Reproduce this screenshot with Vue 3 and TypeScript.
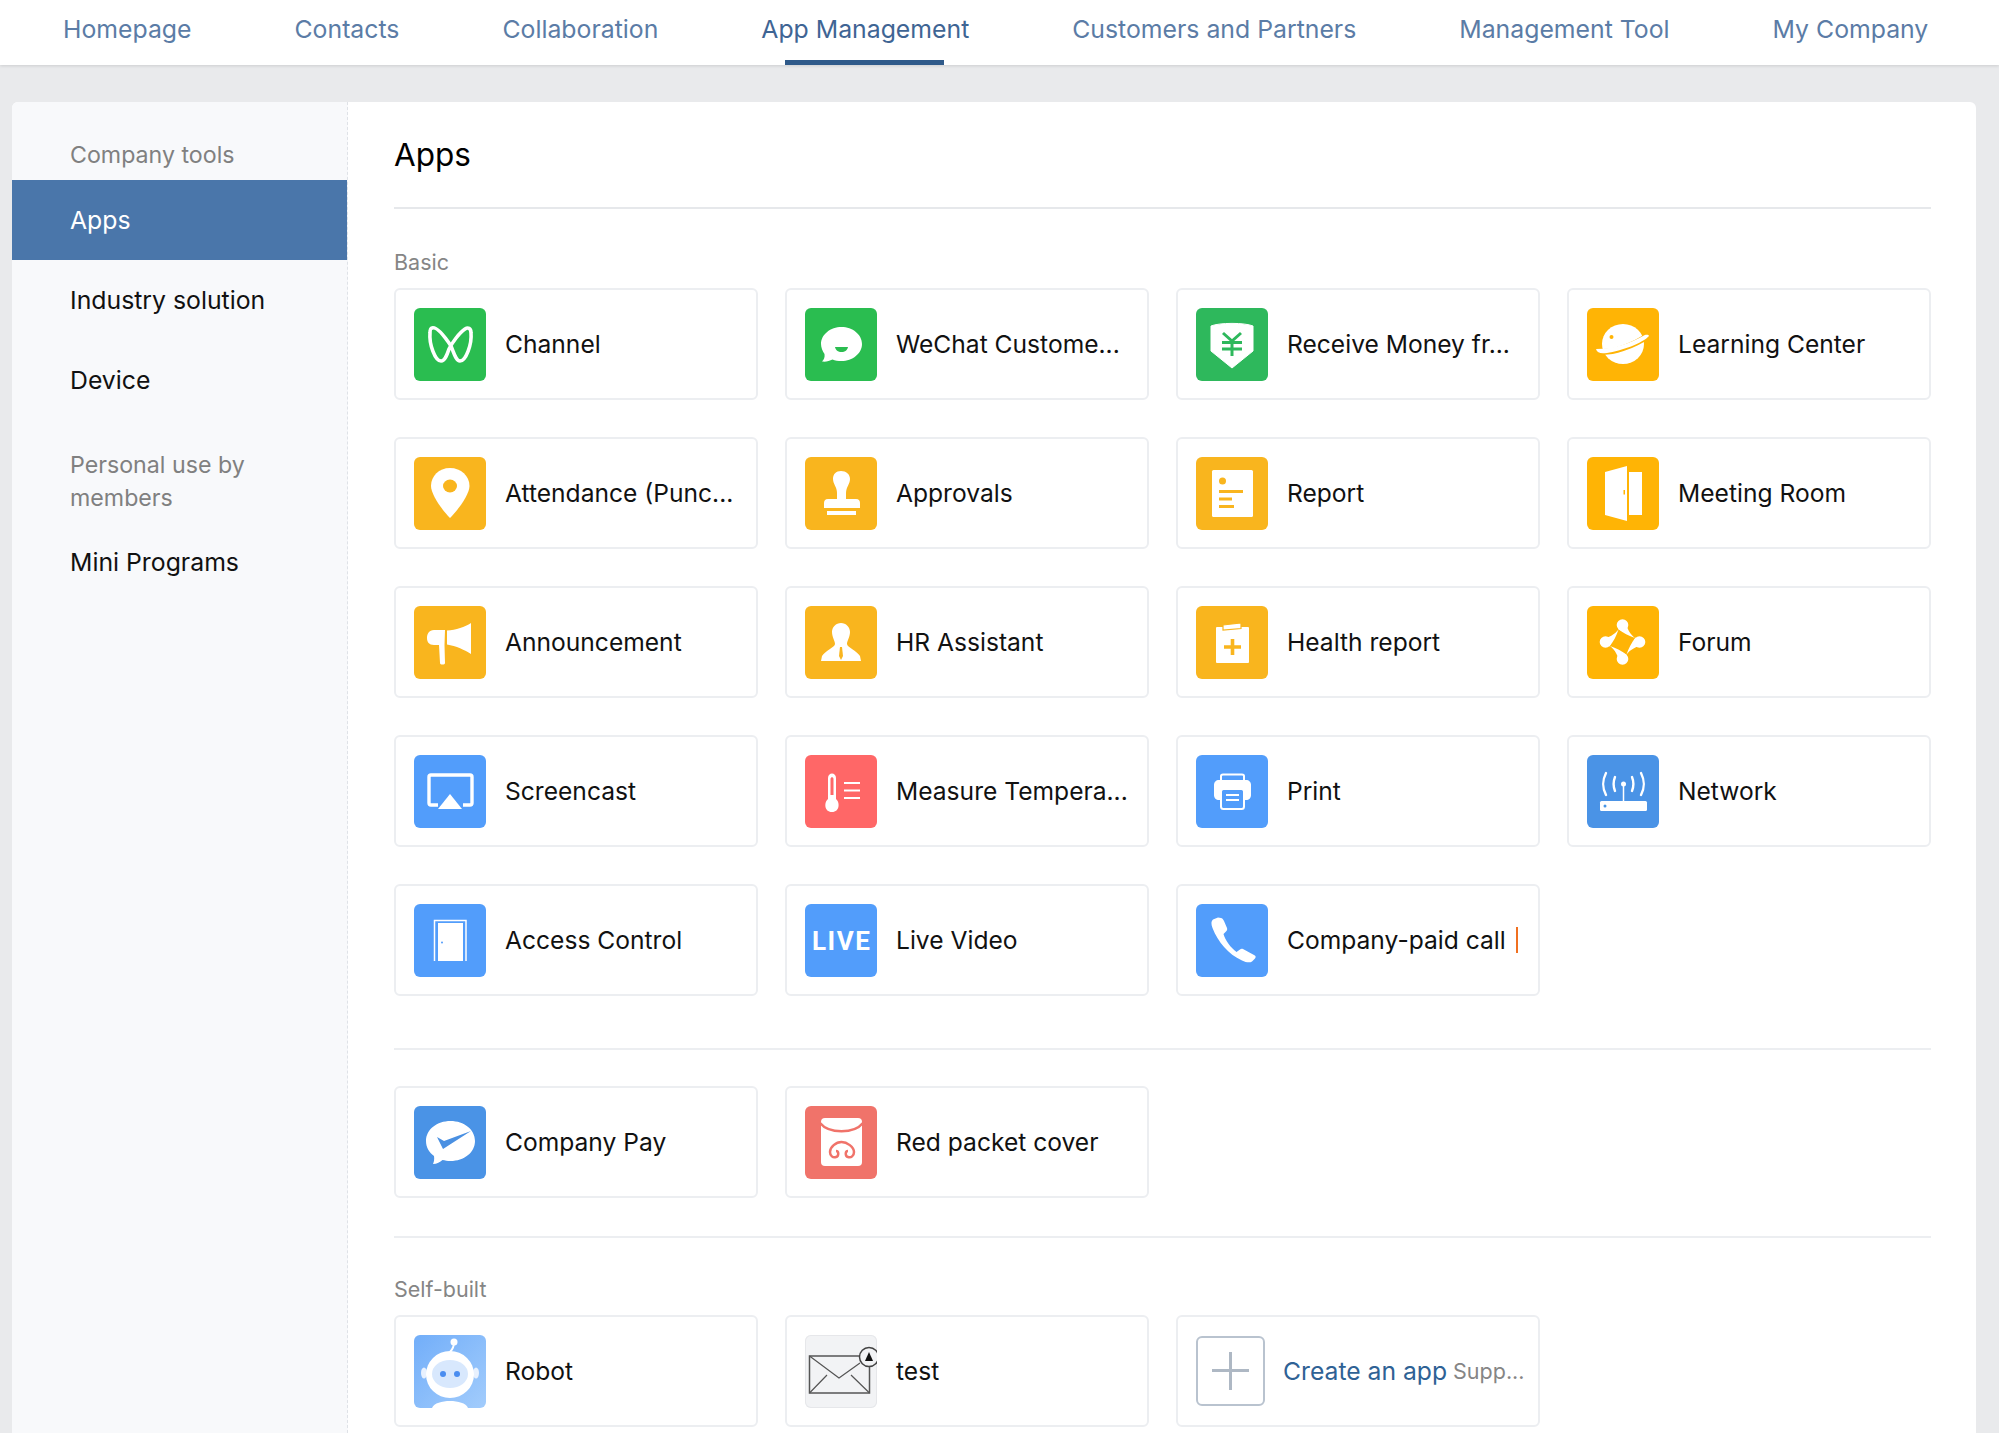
<script setup lang="ts">
interface App {
  name: string
  icon: string
  tone: string
  badge?: boolean
}

const tabs = ['Homepage', 'Contacts', 'Collaboration', 'App Management', 'Customers and Partners', 'Management Tool', 'My Company']

const basicApps: App[] = [
  { name: 'Channel', icon: 'channel', tone: 'green' },
  { name: 'WeChat Custome...', icon: 'wechat', tone: 'green' },
  { name: 'Receive Money fr...', icon: 'money', tone: 'green2' },
  { name: 'Learning Center', icon: 'planet', tone: 'gold' },
  { name: 'Attendance (Punc...', icon: 'pin', tone: 'amber' },
  { name: 'Approvals', icon: 'stamp', tone: 'amber' },
  { name: 'Report', icon: 'report', tone: 'amber' },
  { name: 'Meeting Room', icon: 'door', tone: 'gold' },
  { name: 'Announcement', icon: 'horn', tone: 'amber' },
  { name: 'HR Assistant', icon: 'person', tone: 'amber' },
  { name: 'Health report', icon: 'health', tone: 'amber' },
  { name: 'Forum', icon: 'forum', tone: 'gold' },
  { name: 'Screencast', icon: 'cast', tone: 'blue' },
  { name: 'Measure Tempera...', icon: 'thermo', tone: 'red' },
  { name: 'Print', icon: 'print', tone: 'blue' },
  { name: 'Network', icon: 'network', tone: 'blue2' },
  { name: 'Access Control', icon: 'access', tone: 'blue' },
  { name: 'Live Video', icon: 'live', tone: 'blue' },
  { name: 'Company-paid call', icon: 'phone', tone: 'blue', badge: true }
]

const payApps: App[] = [
  { name: 'Company Pay', icon: 'pay', tone: 'blue2' },
  { name: 'Red packet cover', icon: 'packet', tone: 'coral' }
]

const selfBuilt: App[] = [
  { name: 'Robot', icon: 'robot', tone: 'sky' },
  { name: 'test', icon: 'mail', tone: 'grey' }
]

const groups = [basicApps, payApps, selfBuilt]
const forumArms = [0, 90, 180, 270]
</script>

<template>
  <div class="page">
    <nav class="topbar">
      <a v-for="tab in tabs" :key="tab" class="tab" :class="{ active: tab === 'App Management' }">{{ tab }}</a>
    </nav>

    <div class="panel">
      <aside class="sidebar">
        <div class="side-label">Company tools</div>
        <a class="side-item selected">Apps</a>
        <a class="side-item">Industry solution</a>
        <a class="side-item">Device</a>
        <div class="side-label second">Personal use by members</div>
        <a class="side-item">Mini Programs</a>
      </aside>

      <main class="content">
        <h1 class="title">Apps</h1>

        <div v-for="(group, index) in groups" :key="index" class="group" :class="'group-' + index">
          <div v-if="index === 0" class="group-label">Basic</div>
          <div v-if="index === 2" class="group-label">Self-built</div>
          <div class="grid">
            <div v-for="app in group" :key="app.name" class="card">
              <div class="icon" :class="app.tone">
                <svg viewBox="0 0 72 73" width="72" height="73">
                  <path v-if="app.icon === 'channel'" d="M18 20C23 18 31 29 37 38C40 45 42 53 46 53C52 53 58 36 57 25C57 20 54 19 51 21C45 25 38 35 35 41C33 47 31 53 27 53C21 53 15 36 16 25C16 21 16.500 20.500 18 20Z" fill="none" stroke="#fff" stroke-width="3.600" />
                  <template v-else-if="app.icon === 'wechat'">
                    <path d="M36.500 19C47.500 19 57 26.500 57 36C57 45.500 47.500 53 36.500 53C33 53 30 52.500 27.500 51.500C24.500 53 21 54 17 53.500C19 51.500 20 49 19.500 46C17.500 43 16 39.500 16 36C16 26.500 25.500 19 36.500 19Z" fill="#fff" />
                    <path d="M30 39H43C42.500 42 40 44 36.500 44C33 44 30.500 42 30 39Z" fill="#2abd50" />
                  </template>
                  <template v-else-if="app.icon === 'money'">
                    <path d="M15 18C23 14.500 49 14.500 57 18V43L36 60L15 43Z" fill="#fff" stroke="#fff" stroke-linejoin="round" />
                    <path d="M27 25L36 33L45 25M36 33V48M26 34.500H46M26 41H46" fill="none" stroke="#2eb85c" stroke-width="3" />
                  </template>
                  <template v-else-if="app.icon === 'planet'">
                    <ellipse cx="36" cy="36" rx="21" ry="20" fill="#fff" />
                    <circle cx="24.500" cy="29" r="2" fill="#ffb405" />
                    <path d="M8 43C24 47 48 37 62 27" fill="none" stroke="#ffb405" stroke-width="6" />
                    <path d="M9 41C10 45 14 46 20 45C34 43 56 35 62 28C61 26 58 27 56 28C44 35 26 41 9 41Z" fill="#fff" />
                  </template>
                  <template v-else-if="app.icon === 'pin'">
                    <path d="M36 11C47 11 55.500 19 55.500 29C55.500 38 43 54 36 61C29 54 17 38 17 29C17 19 25 11 36 11Z" fill="#fff" />
                    <ellipse cx="36" cy="29" rx="7" ry="6.500" fill="#f9b51e" />
                  </template>
                  <template v-else-if="app.icon === 'stamp'">
                    <path d="M36 14C41 14 45 17 45 22C45 27 41 30 41 36V42H51C54 42 55 44 55 46V51H19V46C19 44 20 42 23 42H32V36C32 30 28 27 28 22C28 17 31 14 36 14Z" fill="#fff" />
                    <rect x="22" y="54" width="29" height="4" fill="#fff" />
                  </template>
                  <template v-else-if="app.icon === 'report'">
                    <rect x="16" y="13" width="41" height="47" rx="1.500" fill="#fff" />
                    <circle cx="26.500" cy="24" r="3.500" fill="#f9b51e" />
                    <path d="M23 34.500H47M23 42H36M23 49.500H38" stroke="#f9b51e" stroke-width="3" />
                  </template>
                  <template v-else-if="app.icon === 'door'">
                    <path d="M18 15L40 9V64L18 58Z" fill="#fff" />
                    <rect x="42" y="15" width="13" height="43" fill="#fff" />
                    <rect x="36.500" y="33" width="1.500" height="4.500" fill="#ffb405" />
                  </template>
                  <template v-else-if="app.icon === 'horn'">
                    <path d="M31 24H20C15 24 13 28 13 32C13 36 15 39 20 39H25L26 57C26 59 31 59 31 57L30.500 39Z" fill="#fff" />
                    <path d="M33 24.500C42 24 51 21 57 17V48C51 44 42 40 33 38.500Z" fill="#fff" />
                  </template>
                  <template v-else-if="app.icon === 'person'">
                    <path d="M36 17C41 17 45 21 45 26C45 31 42 35 42 38C42 41 52 45 55 50L56 55H16L17 50C20 45 30 41 30 38C30 35 27 31 27 26C27 21 31 17 36 17Z" fill="#fff" />
                    <path d="M35 41H37L38 50L36 54L34 50Z" fill="#f9b51e" />
                  </template>
                  <template v-else-if="app.icon === 'health'">
                    <rect x="20" y="21" width="33" height="36" rx="1" fill="#fff" />
                    <path d="M27 19L45 17V22.500L27 24Z" fill="#fff" stroke="#f9b51e" stroke-width="1.200" />
                    <path d="M36.500 33V49M28 41H45" stroke="#f9b51e" stroke-width="3.600" />
                  </template>
                  <template v-else-if="app.icon === 'forum'">
                    <g v-for="arm in forumArms" :key="arm" :transform="`rotate(${arm} 35.500 36)`">
                      <circle cx="35.500" cy="19" r="5.800" fill="#fff" />
                      <path d="M38 14C40 23 43 28 48 32C42 30 36 27 31 23Z" fill="#fff" />
                    </g>
                  </template>
                  <template v-else-if="app.icon === 'cast'">
                    <path d="M24 50H17C15.500 50 15 49.500 15 48V22C15 20.500 15.500 20 17 20H56C57.500 20 58 20.500 58 22V48C58 49.500 57.500 50 56 50H49" fill="none" stroke="#fff" stroke-width="3.400" />
                    <path d="M36 39L48 54H24Z" fill="#fff" />
                  </template>
                  <template v-else-if="app.icon === 'thermo'">
                    <path d="M23 23C23 17 31 17 31 23V44C35 47 35 57 27 57C19 57 19 47 23 44Z" fill="#fff" />
                    <path d="M25.500 24C25.500 21.500 28.500 21.500 28.500 24V40H25.500Z" fill="#ff6767" />
                    <path d="M39 28H55M39 35.500H55M39 43H55" stroke="#fff" stroke-width="2" />
                  </template>
                  <template v-else-if="app.icon === 'print'">
                    <path d="M25 25V21C25 20 26 19.500 27 19.500H46C47 19.500 48 20 48 21V25" fill="none" stroke="#fff" stroke-width="2" />
                    <path d="M23 25H50C53 25 55 27 55 30V40C55 43 53 45 50 45H23C20 45 18 43 18 40V30C18 27 20 25 23 25Z" fill="#fff" />
                    <rect x="25" y="34" width="23" height="20" rx="2.500" fill="#529dfb" stroke="#fff" stroke-width="2" />
                    <path d="M30 40H43M30 45H43" stroke="#fff" stroke-width="1.800" />
                  </template>
                  <template v-else-if="app.icon === 'network'">
                    <rect x="13" y="46" width="47" height="10" rx="1.500" fill="#fff" />
                    <circle cx="18" cy="51" r="1.500" fill="#4795e6" />
                    <circle cx="36.500" cy="29" r="2.500" fill="#fff" />
                    <path d="M36.500 29V46" stroke="#fff" stroke-width="1.500" />
                    <path d="M28 22C26 27 26 31 28 36M45 22C47 27 47 31 45 36M19 18C15 26 15 32 19 40M54 18C58 26 58 32 54 40" fill="none" stroke="#fff" stroke-width="2.400" stroke-linecap="round" />
                  </template>
                  <template v-else-if="app.icon === 'access'">
                    <path d="M20.500 57V16.500H52V57" fill="none" stroke="#fff" stroke-width="1.500" />
                    <rect x="24" y="19" width="25" height="38" fill="#fff" />
                    <circle cx="28" cy="38.500" r="1" fill="#529dfb" />
                  </template>
                  <text v-else-if="app.icon === 'live'" x="36.700" y="46" text-anchor="middle" class="live-text">LIVE</text>
                  <path v-else-if="app.icon === 'phone'" d="M22 13.500L25 14C26 14 27 15 28 17L31 24C31.500 25.500 31 26.500 30 27.500L27.500 30C29 36 35 44 40.500 48L44 45.500C45 44.500 46 44.500 47 45L58 51C60 52 60 53 59 54.500L56 57.500C54 59 50 58.500 46 56.500C32 50 22 38 16.500 24C15 20 15 17 17 15.500Z" fill="#fff" />
                  <template v-else-if="app.icon === 'pay'">
                    <path d="M36.500 15C50 15 61 23.500 61 35C61 46.500 50 55 36.500 55C33.500 55 31 54.500 28.500 54C26 56 23 58 19 58C20 56 20.500 53 20 50C15 46.500 12 41 12 35C12 23.500 23 15 36.500 15Z" fill="#fff" />
                    <path d="M23 31L30 35L57 25L29 43Z" fill="#4a90e2" />
                  </template>
                  <template v-else-if="app.icon === 'packet'">
                    <rect x="16" y="12" width="41" height="48" rx="4" fill="#fff" />
                    <path d="M15 17C24 28 49 28 58 17" fill="none" stroke="#f0736a" stroke-width="2.500" />
                    <path d="M36.500 36C31 36 25 41 25 46C25 50 28 52 31 51C34 50 34 45 31 45M36.500 36C42 36 49 41 49 46C49 50 46 52 43 51C40 50 40 45 43 45" fill="none" stroke="#f0736a" stroke-width="2.500" />
                  </template>
                  <template v-else-if="app.icon === 'robot'">
                    <path d="M36 17C39 14 40 11 40 7" stroke="#fff" stroke-width="2" fill="none" />
                    <circle cx="40" cy="7" r="3.500" fill="#fff" />
                    <ellipse cx="10" cy="38" rx="3" ry="5.500" fill="#e8f1fe" />
                    <ellipse cx="62" cy="38" rx="3" ry="5.500" fill="#e8f1fe" />
                    <ellipse cx="36" cy="39.500" rx="24" ry="23.500" fill="#fff" />
                    <ellipse cx="36" cy="39" rx="18" ry="14" fill="#d8e8fd" />
                    <circle cx="29" cy="39" r="3" fill="#4a8df0" />
                    <circle cx="43" cy="39" r="3" fill="#4a8df0" />
                    <path d="M18 73C20 68 28 66 36 66C44 66 52 68 54 73Z" fill="#fff" />
                  </template>
                  <template v-else-if="app.icon === 'mail'">
                    <rect x="4.500" y="21" width="60" height="37" fill="none" stroke="#555" stroke-width="1.500" />
                    <path d="M4.500 21L34 43L55 28M4.500 58L22 40M64.500 58L46 40" fill="none" stroke="#555" stroke-width="1.200" />
                    <circle cx="64" cy="22" r="9.500" fill="#f2f3f5" stroke="#444" stroke-width="1.500" />
                    <path d="M64 17L68 26H60Z" fill="#111" />
                  </template>
                </svg>
              </div>
              <span class="name">{{ app.name }}</span>
              <span v-if="app.badge" class="badge-edge"></span>
            </div>

            <div v-if="index === 2" class="card create">
              <div class="plus"></div>
              <a class="create-link">Create an app</a>
              <span class="create-note">Supp...</span>
            </div>
          </div>
        </div>
      </main>
    </div>
  </div>
</template>

<style>
html,
body {
  margin: 0;
  overflow: hidden;
}
</style>

<style scoped>
.page {
  height: 100vh;
  display: flex;
  flex-direction: column;
  overflow: hidden;
  background: #e9eaec;
  font-family: Inter, 'Liberation Sans', sans-serif;
  color: #111;
}

.topbar {
  flex: none;
  height: 65px;
  display: flex;
  gap: 103px;
  padding-left: 63px;
  background: #fff;
  box-shadow: 0 1px 3px rgba(0, 0, 0, 0.12);
}

.tab {
  position: relative;
  line-height: 58px;
  font-size: 24.800px;
  color: #5b7ca6;
  white-space: nowrap;
}

.tab.active {
  color: #3f6594;
}

.tab.active::after {
  content: '';
  position: absolute;
  left: 50%;
  bottom: 0;
  width: 159px;
  height: 5px;
  margin-left: -80px;
  background: #2f5a8a;
}

.panel {
  flex: 1;
  display: flex;
  margin: 37px 23px 0 12px;
  border-radius: 6px 6px 0 0;
  overflow: hidden;
  background: #fff;
}

.sidebar {
  flex: none;
  width: 336px;
  box-sizing: border-box;
  padding-top: 37px;
  background: #f8f9fb;
  border-right: 1px dashed #dfe2e7;
}

.side-label {
  padding: 0 58px;
  margin-bottom: 8px;
  font-size: 23.200px;
  line-height: 33px;
  color: #808080;
}

.side-label.second {
  margin-top: 29px;
  margin-bottom: 7px;
}

.side-item {
  display: block;
  padding-left: 58px;
  font-size: 24.800px;
  line-height: 80px;
  color: #111;
}

.side-item.selected {
  background: #4a76aa;
  color: #fff;
}

.content {
  flex: 1;
  min-width: 0;
  padding: 0 45px 0 46px;
}

.title {
  margin: 0;
  height: 105px;
  border-bottom: 2px solid #e6e8eb;
  font-size: 31.500px;
  font-weight: 400;
  line-height: 105px;
  color: #000;
}

.group-label {
  font-size: 21.500px;
  line-height: 26px;
  margin-bottom: 13px;
  color: #858585;
}

.group-0 {
  padding-top: 40px;
  padding-bottom: 52px;
}

.group-1 {
  padding: 36px 0 38px;
  border-top: 2px solid #eceef1;
}

.group-2 {
  padding-top: 38px;
  border-top: 2px solid #eceef1;
}

.grid {
  display: grid;
  grid-template-columns: repeat(4, 364px);
  column-gap: 27px;
  row-gap: 37px;
}

.card {
  display: flex;
  align-items: center;
  box-sizing: border-box;
  height: 112px;
  padding: 0 18px;
  border: 2px solid #eceef1;
  border-radius: 6px;
  background: #fff;
}

.icon {
  flex: none;
  width: 72px;
  height: 73px;
  border-radius: 6px;
  overflow: hidden;
}

.icon svg {
  display: block;
}

.green { background: #2abd50; }
.green2 { background: #2eb85c; }
.gold { background: #ffb405; }
.amber { background: #f9b51e; }
.blue { background: #529dfb; }
.blue2 { background: #4a93e6; }
.red { background: #ff6767; }
.coral { background: #f0736a; }
.sky { background: linear-gradient(135deg, #72aef9, #a2ccfc); }
.grey { background: #f2f3f5; box-shadow: inset 0 0 0 1px #e6e7ea; }

.live-text {
  font-family: Roboto, sans-serif;
  font-size: 26px;
  font-weight: 700;
  letter-spacing: 1.500px;
  fill: #fff;
}

.name {
  margin-left: 19px;
  font-size: 24.600px;
  white-space: nowrap;
  color: #111;
}

.badge-edge {
  flex: none;
  width: 2px;
  height: 26px;
  margin-left: 10px;
  background: #f07020;
}

.create {
  padding-right: 0;
}

.plus {
  position: relative;
  flex: none;
  width: 65px;
  height: 66px;
  border: 2px solid #b9c3cf;
  border-radius: 6px;
}

.plus::before,
.plus::after {
  content: '';
  position: absolute;
  background: #aeb8c4;
}

.plus::before {
  left: 14px;
  right: 14px;
  top: 31px;
  height: 3px;
}

.plus::after {
  top: 14px;
  bottom: 14px;
  left: 31px;
  width: 3px;
}

.create-link {
  margin-left: 18px;
  font-size: 24.700px;
  white-space: nowrap;
  color: #2f6295;
}

.create-note {
  margin-left: 6px;
  font-size: 21.500px;
  white-space: nowrap;
  color: #858585;
}
</style>
